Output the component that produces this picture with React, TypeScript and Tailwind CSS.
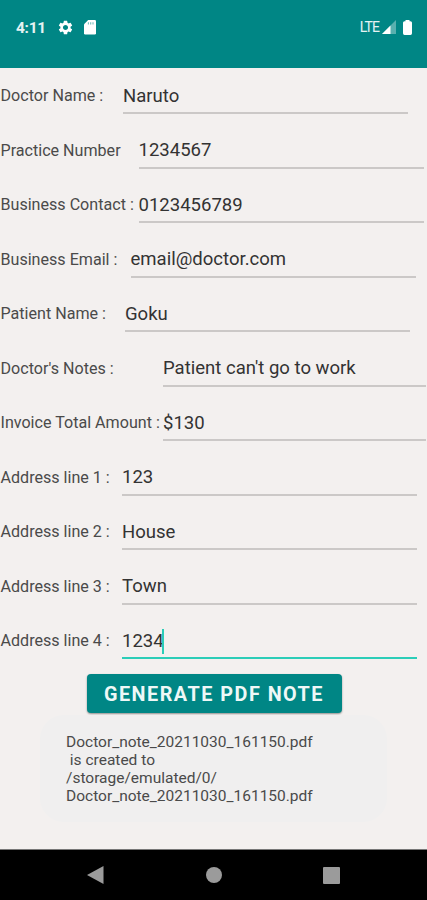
import { useState } from "react";
import clsx from "clsx";

type Field = {
  label: string;
  value: string;
  // label column and underline widths differ per row
  labelWidth: string;
  inputWidth: string;
};

const FIELDS: Field[] = [
  { label: "Doctor Name :", value: "Naruto", labelWidth: "w-[123px]", inputWidth: "w-[285px]" },
  { label: "Practice Number", value: "1234567", labelWidth: "w-[138.5px]", inputWidth: "w-[285px]" },
  { label: "Business Contact :", value: "0123456789", labelWidth: "w-[138.5px]", inputWidth: "w-[285px]" },
  { label: "Business Email :", value: "email@doctor.com", labelWidth: "w-[130.5px]", inputWidth: "w-[285px]" },
  { label: "Patient Name :", value: "Goku", labelWidth: "w-[125px]", inputWidth: "w-[285px]" },
  { label: "Doctor's Notes :", value: "Patient can't go to work", labelWidth: "w-[163px]", inputWidth: "w-[263px]" },
  { label: "Invoice Total Amount :", value: "$130", labelWidth: "w-[163px]", inputWidth: "w-[263px]" },
  { label: "Address line 1 :", value: "123", labelWidth: "w-[122px]", inputWidth: "w-[295px]" },
  { label: "Address line 2 :", value: "House", labelWidth: "w-[122px]", inputWidth: "w-[295px]" },
  { label: "Address line 3 :", value: "Town", labelWidth: "w-[122px]", inputWidth: "w-[295px]" },
  { label: "Address line 4 :", value: "1234", labelWidth: "w-[122px]", inputWidth: "w-[295px]" },
];

function StatusBar() {
  return (
    <header className="flex h-[67.5px] shrink-0 items-start bg-[#008685] pt-[17px] text-white">
      <span className="ml-[16px] w-[41px] text-[15.5px] leading-[23px] font-bold tracking-[-0.3px] text-white/90">4:11</span>
      <svg className="mt-[1.5px] size-[17px]" viewBox="0 0 24 24" fill="currentColor">
        <path d="M19.14 12.94c.04-.3.06-.61.06-.94 0-.32-.02-.64-.07-.94l2.03-1.58a.49.49 0 0 0 .12-.61l-1.92-3.32a.488.488 0 0 0-.59-.22l-2.39.96c-.5-.38-1.03-.7-1.62-.94l-.36-2.54a.484.484 0 0 0-.48-.41h-3.84c-.24 0-.43.17-.47.41l-.36 2.54c-.59.24-1.13.57-1.62.94l-2.39-.96c-.22-.08-.47 0-.59.22L2.74 8.87c-.12.21-.08.47.12.61l2.03 1.58c-.05.3-.09.63-.09.94s.02.64.07.94l-2.03 1.58a.49.49 0 0 0-.12.61l1.92 3.32c.12.22.37.29.59.22l2.39-.96c.5.38 1.03.7 1.62.94l.36 2.54c.05.24.24.41.48.41h3.84c.24 0 .44-.17.47-.41l.36-2.54c.59-.24 1.13-.56 1.62-.94l2.39.96c.22.08.47 0 .59-.22l1.92-3.32c.12-.22.07-.47-.12-.61l-2.01-1.58zM12 15.6c-1.98 0-3.6-1.62-3.6-3.6s1.62-3.6 3.6-3.6 3.6 1.62 3.6 3.6-1.62 3.6-3.6 3.6z" />
      </svg>
      <svg className="mt-[3px] ml-[9.5px] h-[14.5px] w-[12px]" viewBox="0 0 12 14.5">
        <path d="M4.2 0H10.8Q12 0 12 1.2V13.3Q12 14.5 10.8 14.5H1.2Q0 14.5 0 13.3V4.2Z" fill="#fff" />
        <path d="M4.4 2.2V4.6M6.7 2.2V4.6M9 2.2V4.6" stroke="#008685" strokeOpacity=".55" strokeWidth="1.1" />
      </svg>
      <span className="ml-auto text-[14px] leading-[20px] tracking-[-0.9px] text-white/90">LTE</span>
      <svg className="mt-[3px] ml-[3px] h-[14px] w-[14px]" viewBox="0 0 14 14" fill="#fff">
        <path d="M14 0V14H0Z" opacity=".35" />
        <path d="M8.5 5.5V14H0Z" />
      </svg>
      <svg className="mt-[2.5px] mr-[15px] ml-[7px] h-[15px] w-[9px]" viewBox="0 0 9 15" fill="#fff">
        <path d="M2.5 0H6.5V1.2H7.5Q9 1.2 9 2.7V13.3Q9 15 7.5 15H1.5Q0 15 0 13.3V2.7Q0 1.2 1.5 1.2H2.5Z" />
      </svg>
    </header>
  );
}

function FieldRow({ field, focused, onFocus }: { field: Field; focused: boolean; onFocus: () => void }) {
  return (
    <div className="flex h-[54.5px] whitespace-nowrap" onClick={onFocus}>
      <label className={clsx("shrink-0 pt-[17.5px] pl-[0.5px] text-[16.1px] leading-[22px] text-[#4a4a4a]", field.labelWidth)}>
        {field.label}
      </label>
      <div
        className={clsx(
          "flex h-[46.5px] shrink-0 items-start pt-[16px]",
          field.inputWidth,
          focused ? "border-b-2 border-[#2bcdb8]" : "border-b-[2.5px] border-[#cbc8c7]",
        )}
      >
        <span className="text-[18.55px] leading-[24px] text-[#333]">{field.value}</span>
        {focused && <span className="-ml-[1.5px] h-[25px] w-[2px] bg-[#2bcdb8]" />}
      </div>
    </div>
  );
}

function Toast() {
  return (
    <div className="mt-[2px] ml-[40px] h-[107px] w-[347px] rounded-[24px] bg-[#f0efef] pt-[18px] pl-[26px] text-[15.5px] leading-[18.2px] whitespace-pre text-[#4a4a4a]">
      {"Doctor_note_20211030_161150.pdf\n is created to\n/storage/emulated/0/\nDoctor_note_20211030_161150.pdf"}
    </div>
  );
}

function NavBar() {
  return (
    <nav className="mt-auto flex h-[51px] shrink-0 items-center border-t border-[#777] bg-black text-[#9b9b9b]">
      <svg className="ml-[87px] h-[18px] w-[17px]" viewBox="0 0 17 18" fill="currentColor">
        <path d="M16.5 0V18L0 9Z" />
      </svg>
      <span className="ml-[102px] size-4 rounded-full bg-[#9b9b9b]" />
      <span className="ml-[101px] size-[17px] rounded-[1px] bg-[#9b9b9b]" />
    </nav>
  );
}

export default function App() {
  const [focused, setFocused] = useState(FIELDS.length - 1);

  return (
    <div className="flex h-[900px] w-[427px] flex-col overflow-hidden bg-[#f3f0ef] font-['Roboto',sans-serif]">
      <StatusBar />
      <main>
        {FIELDS.map((field, i) => (
          <FieldRow key={field.label} field={field} focused={i === focused} onFocus={() => setFocused(i)} />
        ))}
        <button className="mt-[6.5px] ml-[86.5px] block h-[39px] w-[255px] rounded-[4px] bg-[#008685] text-[19.8px] leading-[41px] font-bold tracking-[1.5px] whitespace-nowrap text-[#eef8f7] shadow-[0_1px_2px_rgba(0,0,0,0.4)]">
          GENERATE PDF NOTE
        </button>
        <Toast />
      </main>
      <NavBar />
    </div>
  );
}
